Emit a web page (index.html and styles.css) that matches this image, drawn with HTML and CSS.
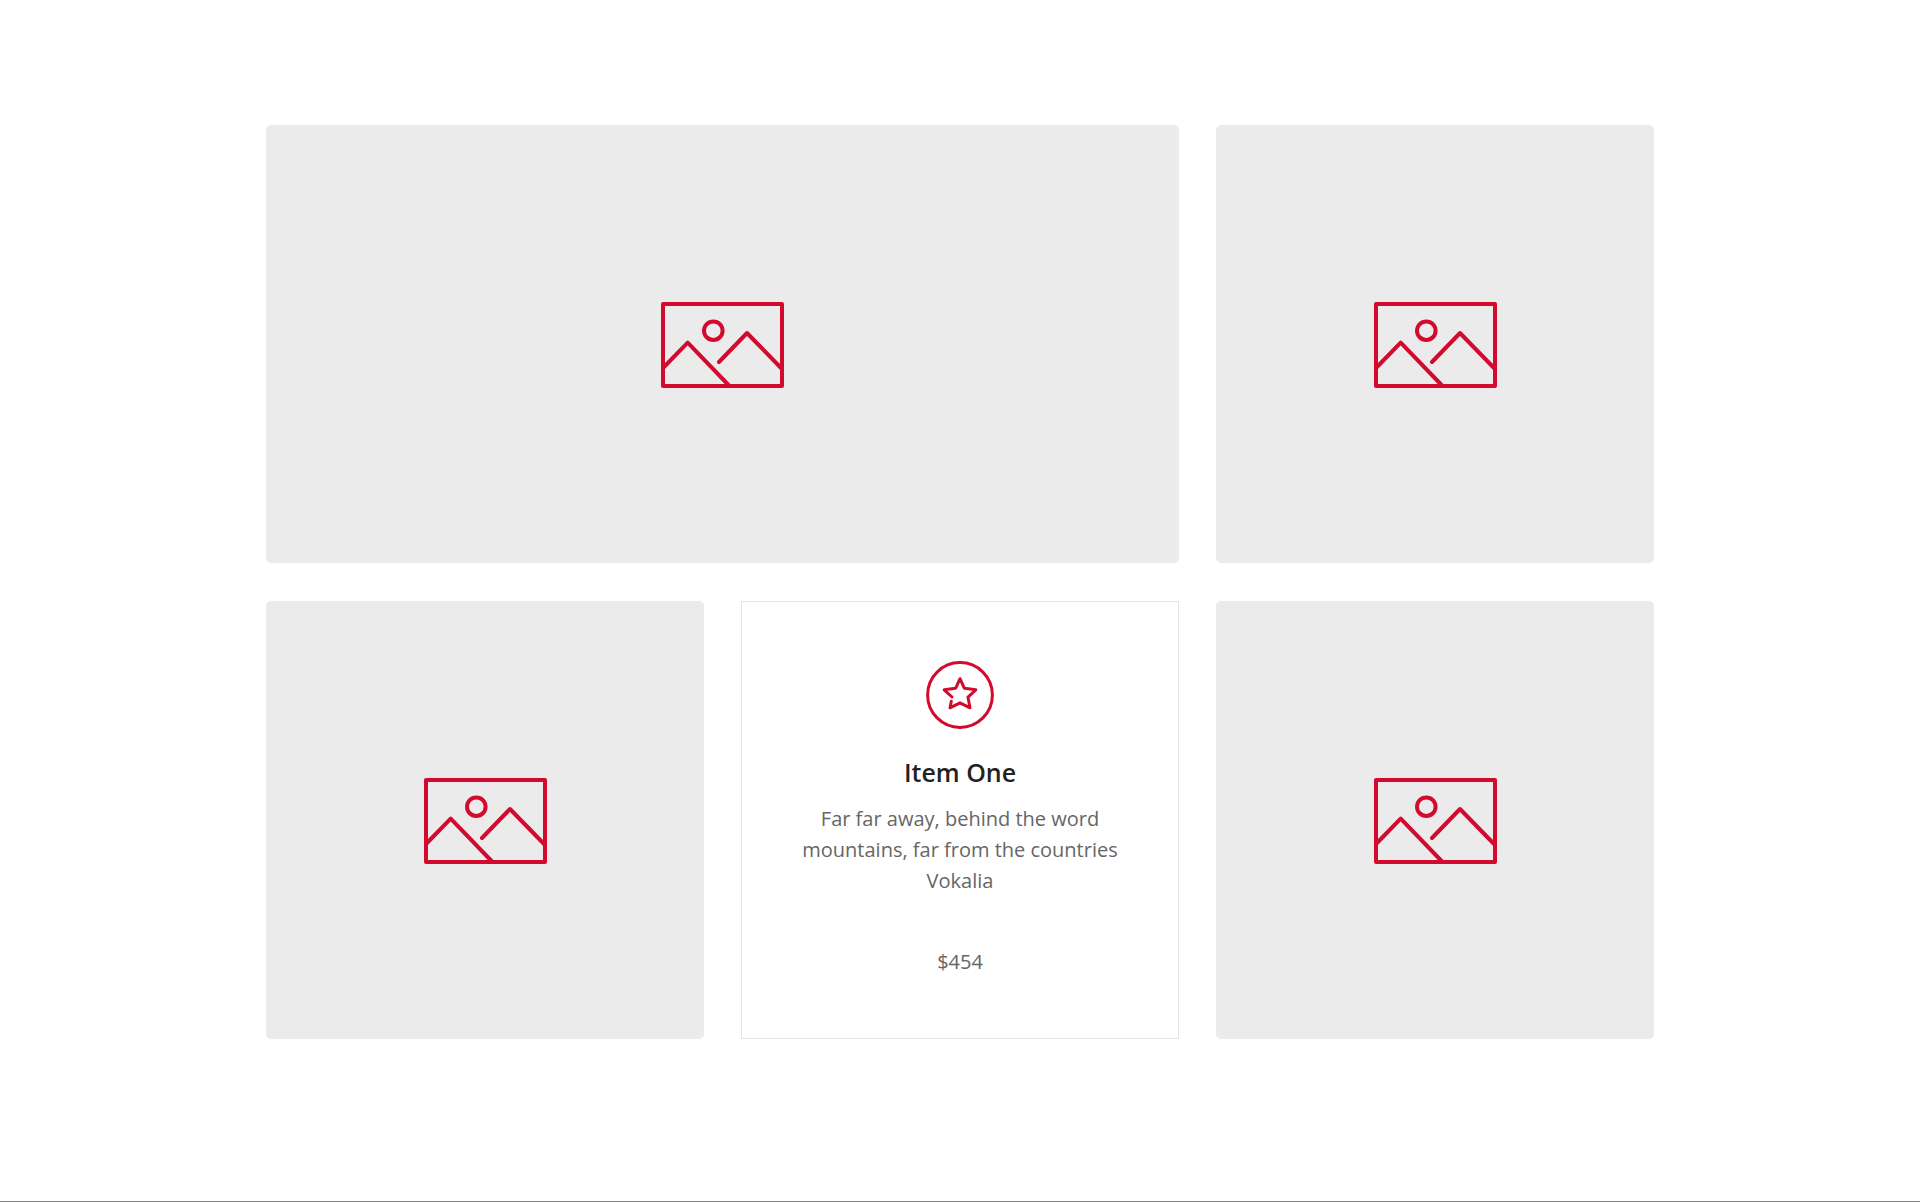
FILE: index.html
```
<!DOCTYPE html>
<html lang="en">
<head>
    <meta charset="UTF-8">
    <meta name="viewport" content="width=device-width, initial-scale=1.0">
    <title>Items</title>
    <link rel="stylesheet" href="styles.css">
</head>
<body>
    <svg class="sprite" aria-hidden="true">
        <symbol id="icon-image" viewBox="0 0 123 86">
            <rect x="2" y="2" width="119" height="82"/>
            <circle cx="52.3" cy="28.7" r="9.3"/>
            <path d="M2 66 26.7 40.7 68 83.5"/>
            <path d="M58 60 86 31 121 67"/>
        </symbol>
    </svg>

    <main class="gallery">
        <div class="tile tile-wide">
            <svg class="image-icon" role="img" aria-label="Image placeholder"><use href="#icon-image"/></svg>
        </div>
        <div class="tile">
            <svg class="image-icon" role="img" aria-label="Image placeholder"><use href="#icon-image"/></svg>
        </div>
        <div class="tile">
            <svg class="image-icon" role="img" aria-label="Image placeholder"><use href="#icon-image"/></svg>
        </div>

        <article class="item">
            <svg class="star-icon" viewBox="0 0 68 68" aria-hidden="true">
                <circle cx="34" cy="34" r="32.4"/>
                <path d="M26 36 18.2 28.8 29.6 27.3 34 17.7 38.4 27.3 49.8 28.8 42 36.2 44 46.8 34 41.8 24 46.8 25.3 40.3"/>
            </svg>
            <h2>Item One</h2>
            <p>Far far away, behind the word mountains, far from the countries Vokalia</p>
            <p class="price">$454</p>
        </article>

        <div class="tile">
            <svg class="image-icon" role="img" aria-label="Image placeholder"><use href="#icon-image"/></svg>
        </div>
    </main>
</body>
</html>
```

FILE: styles.css
```
* {
    box-sizing: border-box;
}

body {
    font-family: "Open Sans", sans-serif;
    font-size: 20px;
    line-height: 31px;
    color: #666;
    background-color: #fff;
    margin: 0;
    padding: 125px 40px;
    min-height: 100vh;
    border-bottom: 1px solid #888;
}

.sprite {
    display: none;
}

.gallery {
    display: grid;
    grid-template-columns: repeat(3, 1fr);
    grid-auto-rows: minmax(438px, auto);
    gap: 38px 37px;
    max-width: 1388px;
    margin: 0 auto;
}

.tile {
    display: flex;
    justify-content: center;
    align-items: center;
    padding-top: 2px;
    background-color: #ebebeb;
    border-radius: 5px;
}

.tile-wide {
    grid-column: span 2;
}

.image-icon,
.star-icon {
    fill: none;
    stroke: #d20a2e;
    stroke-linecap: round;
    stroke-linejoin: round;
}

.image-icon {
    width: 123px;
    height: 86px;
    stroke-width: 4;
}

.item {
    background-color: #fff;
    border: 1px solid #e5e5e5;
    padding: 59px 50px;
    text-align: center;
}

.star-icon {
    display: block;
    width: 68px;
    height: 68px;
    margin: 0 auto 28px;
    stroke-width: 3;
}

h2 {
    margin: 0 0 15px;
    font-size: 25px;
    font-weight: 600;
    line-height: 31px;
    color: #222;
}

p {
    margin: 0;
}

.price {
    margin-top: 50px;
}

@media (max-width: 1100px) {
    .gallery {
        grid-template-columns: 1fr;
    }

    .tile-wide {
        grid-column: auto;
    }
}
```
